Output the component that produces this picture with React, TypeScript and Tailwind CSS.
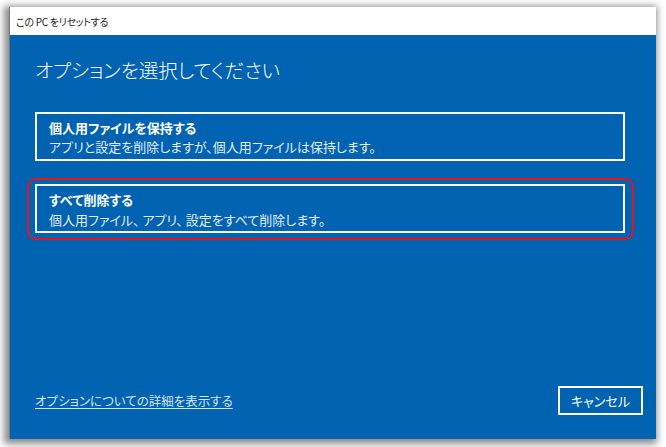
import React from "react";

const JP = { fontFamily: '"Noto Sans CJK JP", "Noto Sans", sans-serif' };

export default function App() {
  return (
    <div className="w-[666px] h-[447px] bg-white pt-[7px] pl-[9px] overflow-hidden [font-feature-settings:'palt']" style={JP}>
      <div className="w-[647px] h-[432px] flex flex-col shadow-[-2px_2px_7px_3px_rgba(0,0,0,0.45)] border-l border-[#7a7a7a]">
        <div className="h-[28px] bg-white flex items-center pl-[6px] text-[10px] text-[#222] whitespace-pre tracking-[-0.3px]">
          この PC をリセットする
        </div>
        <div className="flex-1 bg-[#0063b1] flex flex-col pt-[23px] pb-[24px]">
          <div className="pl-[25px] text-[19.5px] leading-[24px] font-light text-white">
            オプションを選択してください
          </div>
          <div className="pl-[25px] pr-[31px] mt-[30px] flex flex-col gap-[23px]">
            <div className="h-[49px] border-2 border-white flex flex-col justify-center pl-[12px]">
              <div className="text-[13px] leading-[19px] font-bold text-white">個人用ファイルを保持する</div>
              <div className="text-[13px] leading-[19px] text-[#e3edf7]">
                アプリと設定を削除しますが、個人用ファイルは保持します。
              </div>
            </div>
            <div className="relative">
              <div className="h-[49px] border-2 border-white flex flex-col justify-center pl-[12px] pt-[3px]">
                <div className="text-[13px] leading-[20px] font-bold text-white">すべて削除する</div>
                <div className="text-[13px] leading-[20px] text-[#e3edf7]">
                  個人用ファイル、 アプリ、 設定をすべて削除します。
                </div>
              </div>
              <span className="absolute left-[-8px] top-[-6px] right-[-9px] bottom-[-7px] border-2 border-[#e8141b] rounded-[9px] pointer-events-none" />
            </div>
          </div>
          <div className="flex-1" />
          <div className="flex items-center justify-between pl-[25px] pr-[13px]">
            <span className="text-[12.5px] leading-[16px] text-[#d2e3f3] underline underline-offset-2 mt-[1px]">
              オプションについての詳細を表示する
            </span>
            <div className="w-[85px] h-[29px] border-2 border-white flex items-center justify-center text-[13px] text-white">
              キャンセル
            </div>
          </div>
        </div>
      </div>
    </div>
  );
}
